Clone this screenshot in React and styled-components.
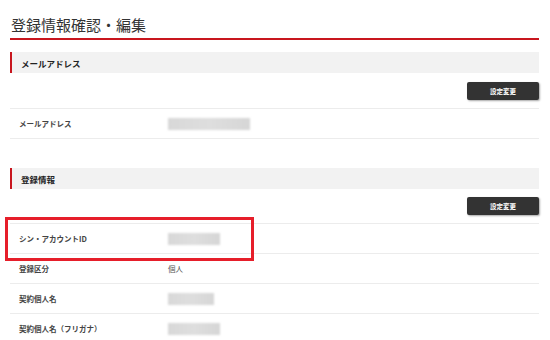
import React from 'react'
import styled, {createGlobalStyle} from 'styled-components'

const red = '#c8161e'
const markRed = '#e61e2a'
const line = '#ececec'
const text = '#333'

const GlobalStyle = createGlobalStyle`
  body {
    margin: 0;
    background: #fff;
    font-family: "Noto Sans CJK JP", "Noto Sans", sans-serif;
    color: ${text};
  }
`

const Page = styled.div`
  padding: 0 11px 0 10px;
`
const Title = styled.h1`
  margin: 17px 0 0;
  padding: 0 0 6px 1px;
  font-size: 15px;
  line-height: 15px;
  font-weight: 400;
  color: ${text};
  border-bottom: 2px solid ${red};
`
const Section = styled.section`
  margin-top: ${p => p.$gap}px;
`
const SectionHeader = styled.h2`
  margin: 0;
  height: 21px;
  display: flex;
  align-items: center;
  padding-left: 9px;
  background: #f2f2f2;
  border-left: 2px solid ${red};
  font-size: 8.5px;
  font-weight: 700;
  color: #222;
`
const ButtonBar = styled.div`
  display: flex;
  justify-content: flex-end;
  padding: ${p => p.$top}px 0 8px;
`
const Button = styled.button`
  width: 72px;
  height: 18px;
  border: none;
  border-radius: 2px;
  background: #333;
  color: #fff;
  font-family: inherit;
  font-size: 6.5px;
  font-weight: 700;
  box-shadow: 1px 1px 2px rgba(0, 0, 0, 0.35);
  padding: 0;
`
const Rows = styled.div`
  display: flex;
  flex-direction: column;
`
const Row = styled.div`
  position: relative;
  display: grid;
  grid-template-columns: 158px 1fr;
  align-items: center;
  height: 29px;
  border-bottom: 1px solid ${line};
  &:first-child {
    border-top: 1px solid ${line};
  }
`
const Label = styled.div`
  padding-left: 9px;
  font-size: 7.5px;
  font-weight: 700;
  color: #444;
`
const Value = styled.div`
  font-size: 7.5px;
  color: #555;
`
const Masked = styled.div`
  width: ${p => p.$w}px;
  height: 12px;
  background: linear-gradient(90deg, #d8d8d8, #dedede 50%, #d6d6d6);
  filter: blur(0.8px);
`
const Marker = styled.div`
  position: absolute;
  top: -7px;
  left: -5px;
  width: 249px;
  height: 44px;
  box-sizing: border-box;
  border: 3px solid ${markRed};
  pointer-events: none;
`

const accountRows = [
  {label: 'シン・アカウントID', mask: 52, marked: true},
  {label: '登録区分', value: '個人'},
  {label: '契約個人名', mask: 46},
  {label: '契約個人名（フリガナ）', mask: 52},
]

export default function App() {
  return (
    <>
      <GlobalStyle />
      <Page>
        <Title>登録情報確認・編集</Title>

        <Section $gap={12}>
          <SectionHeader>メールアドレス</SectionHeader>
          <ButtonBar $top={9}>
            <Button>設定変更</Button>
          </ButtonBar>
          <Rows>
            <Row>
              <Label>メールアドレス</Label>
              <Value>
                <Masked $w={82} />
              </Value>
            </Row>
          </Rows>
        </Section>

        <Section $gap={29}>
          <SectionHeader>登録情報</SectionHeader>
          <ButtonBar $top={8}>
            <Button>設定変更</Button>
          </ButtonBar>
          <Rows>
            {accountRows.map(({label, value, mask, marked}) => (
              <Row key={label}>
                <Label>{label}</Label>
                <Value>{value || <Masked $w={mask} />}</Value>
                {marked && <Marker />}
              </Row>
            ))}
          </Rows>
        </Section>
      </Page>
    </>
  )
}
